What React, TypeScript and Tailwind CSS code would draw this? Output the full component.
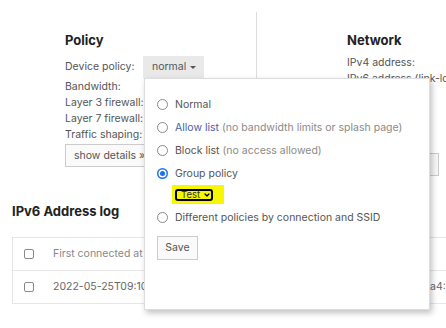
import React from 'react';
import { ChevronDown } from 'lucide-react';

function Radio({ checked = false }: { checked?: boolean }) {
  if (checked) {
    return (
      <span className="flex h-[11px] w-[11px] shrink-0 items-center justify-center rounded-full bg-[#1a73e8]">
        <span className="h-[5px] w-[5px] rounded-full bg-[#1a73e8] ring-[1.5px] ring-white" />
      </span>
    );
  }
  return <span className="h-[11px] w-[11px] shrink-0 rounded-full border border-[#8a8a8a] bg-white" />;
}

function Checkbox() {
  return <span className="block h-[10px] w-[10px] rounded-[2px] border border-[#8a8a8a] bg-white" />;
}

const policyRows = ['Bandwidth:', 'Layer 3 firewall:', 'Layer 7 firewall:', 'Traffic shaping:'];
const networkRows = [
  'IPv4 address:',
  'IPv6 address (link-local):',
  'MAC address:',
  'VLAN:',
  'Manufacturer:',
  'SSID:',
];

export default function App() {
  return (
    <div className="relative h-[328px] w-[446px] overflow-hidden bg-white font-['Inter',sans-serif] text-[10.5px] text-[#555]">
      {/* top sections */}
      <div className="flex h-[176px] pt-[12px]">
        <div className="w-[256px] shrink-0 pl-[65px] pt-[18px]">
          <h2 className="h-[20px] text-[13px] font-bold leading-[20px] text-[#222]">Policy</h2>
          <div className="mt-[6px] flex h-[22px] items-center">
            <span className="w-[78px] whitespace-nowrap">Device policy:</span>
            <span className="flex h-[22px] w-[61px] items-center whitespace-nowrap bg-[#e9e9e9] pl-[9px]">
              normal
              <span className="ml-[4px] h-0 w-0 border-x-[3px] border-t-[3px] border-x-transparent border-t-[#555]" />
            </span>
          </div>
          <div className="mt-[1px]">
            {policyRows.map((r) => (
              <div key={r} className="h-[16px] whitespace-nowrap leading-[16px]">{r}</div>
            ))}
          </div>
          <button className="mt-[1px] h-[23px] w-[90px] whitespace-nowrap border border-[#ccc] bg-[#fafafa] pl-[8px] text-left text-[10.5px] text-[#555]">
            show details »
          </button>
        </div>
        <div className="h-[164px] flex-1 border-l border-[#ddd] pl-[90px] pt-[18px]">
          <h2 className="h-[20px] whitespace-nowrap text-[13px] font-bold leading-[20px] text-[#222]">Network</h2>
          <div className="mt-[5px]">
            {networkRows.map((r) => (
              <div key={r} className="h-[16px] whitespace-nowrap leading-[16px]">{r}</div>
            ))}
          </div>
          <button className="mt-[2px] h-[23px] w-[92px] whitespace-nowrap border border-[#ccc] bg-[#f7f7f7] pl-[8px] text-left text-[10.5px] text-[#555]">
            show details »
          </button>
        </div>
      </div>

      {/* IPv6 log */}
      <h2 className="ml-[12px] mt-[25px] h-[20px] text-[13px] font-bold leading-[20px] text-[#222]">IPv6 Address log</h2>
      <div className="ml-[12px] mt-[16px] w-[600px] border border-[#e6e6e6]">
        <div className="flex h-[33px] items-center border-b border-[#e6e6e6] text-[#888]">
          <div className="w-[40px] pl-[11px]"><Checkbox /></div>
          <div className="w-[377px] whitespace-nowrap">First connected at</div>
          <div />
        </div>
        <div className="flex h-[32px] items-center text-[#666]">
          <div className="w-[40px] pl-[11px]"><Checkbox /></div>
          <div className="w-[377px] whitespace-nowrap">2022-05-25T09:10:42Z</div>
          <div className="whitespace-nowrap">a4:1e:3c:7b:90:2f</div>
        </div>
      </div>

      {/* policy popover */}
      <div className="absolute left-[144px] top-[78px] h-[232px] w-[286px] border border-[#ddd] bg-white pl-[12px] pt-[14px] shadow-[2px_3px_6px_rgba(0,0,0,0.25)]">
        <div className="flex h-[23px] items-center gap-[7px]">
          <Radio />
          <span>Normal</span>
        </div>
        <div className="flex h-[23px] items-center gap-[7px] whitespace-nowrap">
          <Radio />
          <span>
            <span className="text-[#4d5ea6]">Allow list</span>{' '}
            <span className="text-[#8a8a8a]">(no bandwidth limits or splash page)</span>
          </span>
        </div>
        <div className="flex h-[23px] items-center gap-[7px] whitespace-nowrap">
          <Radio />
          <span>
            <span className="text-[#5c5048]">Block list</span>{' '}
            <span className="text-[#8a8a8a]">(no access allowed)</span>
          </span>
        </div>
        <div className="flex h-[23px] items-center gap-[7px]">
          <Radio checked />
          <span>Group policy</span>
        </div>
        <div className="ml-[15px] flex h-[19px] w-[52px] items-center bg-[#f7f700] pl-[3px]">
          <span className="flex h-[12px] w-[38px] items-center gap-[3px] rounded-[3px] border-2 border-black pl-[4px] text-[9.5px] leading-none text-[#333]">
            Test
            <ChevronDown size={10} strokeWidth={4} className="text-black" />
          </span>
        </div>
        <div className="mt-[2px] flex h-[23px] items-center gap-[7px] whitespace-nowrap">
          <Radio />
          <span>Different policies by connection and SSID</span>
        </div>
        <button className="mt-[7px] h-[24px] w-[41px] border border-[#ccc] bg-[#fafafa] text-[10.5px] text-[#555]">
          Save
        </button>
      </div>
    </div>
  );
}
